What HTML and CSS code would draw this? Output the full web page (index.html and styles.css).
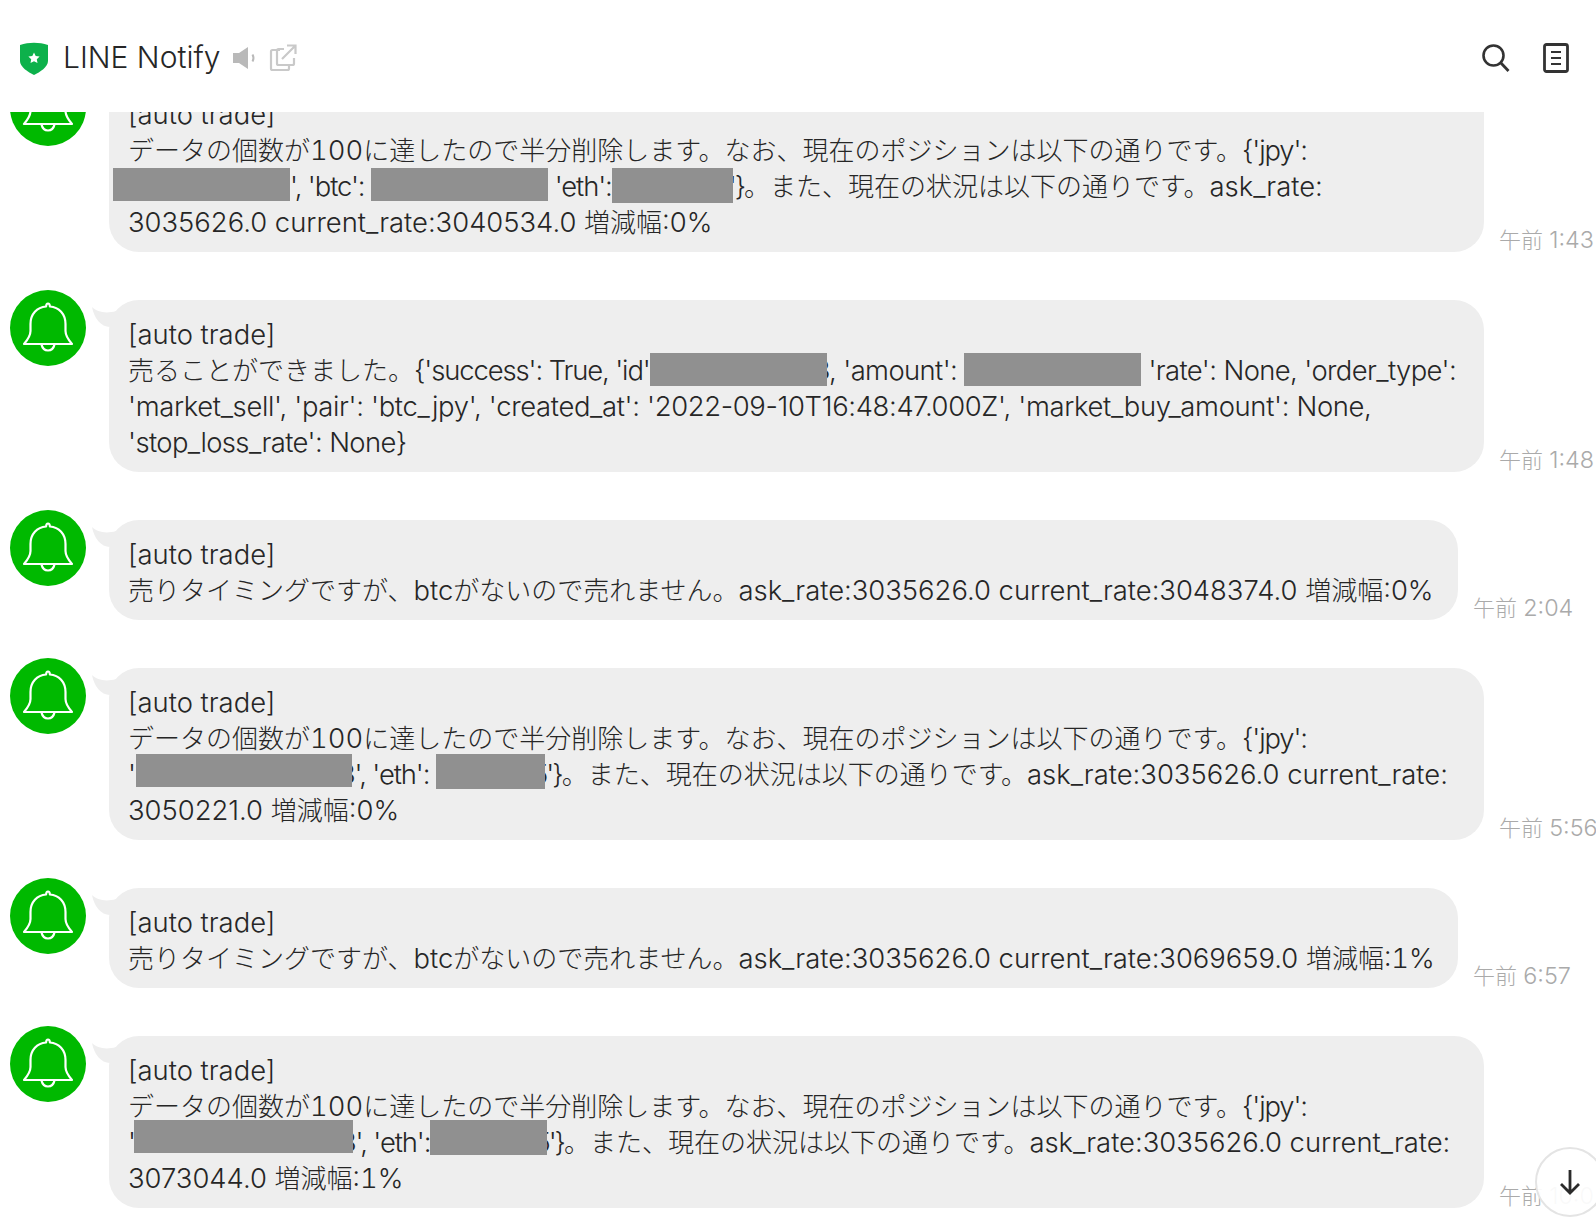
FILE: index.html
```html
<!DOCTYPE html>
<html lang="ja">
<head>
    <meta charset="utf-8">
    <title>LINE Notify</title>
    <link rel="stylesheet" href="styles.css">
</head>
<body>
    <svg class="sprite" width="0" height="0">
        <symbol id="bell" viewBox="0 0 76 76">
            <path d="M38 13.500c-1.100 0-1.800.7-1.900 3C27 17.200 20.500 24 20.500 34v7c0 5-3.500 9.500-6.500 13h48c-3-3.500-6.500-8-6.500-13v-7c0-10-6.500-16.800-15.600-17.500-.1-2.300-.8-3-1.900-3z" fill="none" stroke="#fff" stroke-width="2.200" stroke-linejoin="round"/>
            <path d="M31.500 54.500c.8 3.600 3.500 6 6.500 6s5.700-2.400 6.500-6" fill="none" stroke="#fff" stroke-width="2.200"/>
        </symbol>
    </svg>

    <header class="topbar">
        <svg class="shield" width="30" height="33" viewBox="0 0 30 33">
            <path d="M1 3c9-3 19-3 28 0v16c0 6-8 11-14 14C9 30 1 25 1 19z" fill="#0db14b"/>
            <path d="M15 10.500l1.700 3.500 3.900.5-2.800 2.700.7 3.800-3.500-1.800-3.500 1.800.7-3.800-2.800-2.700 3.900-.5z" fill="#fff"/>
        </svg>
        <h1 class="room-name">LINE Notify</h1>
        <svg class="mute-icon" width="24" height="24" viewBox="0 0 24 24">
            <path d="M1 7h6l9-6v22l-9-6H1z" fill="#b9b9b9"/>
            <path d="M20.500 8.500c1.300 2.300 1.300 4.700 0 7" fill="none" stroke="#b9b9b9" stroke-width="2"/>
        </svg>
        <svg class="share-icon" width="28" height="28" viewBox="0 0 28 28">
            <path d="M11 6H3.500C2.500 6 2 6.500 2 7.500v17c0 1 .5 1.500 1.500 1.500h15c1 0 1.500-.5 1.500-1.500V22" fill="none" stroke="#c9c9c9" stroke-width="2.200"/>
            <path d="M25 14v5.500c0 1-.5 1.500-1.500 1.500h-14C8.500 21 8 20.500 8 19.500v-13C8 5.500 8.500 5 9.500 5H15" fill="none" stroke="#c9c9c9" stroke-width="2.200"/>
            <path d="M13 15L26 2M18 1.500h8.500V10" fill="none" stroke="#c9c9c9" stroke-width="2.200"/>
        </svg>
        <div class="topbar-actions">
            <svg width="28" height="28" viewBox="0 0 28 28">
                <circle cx="11.500" cy="11.500" r="10" fill="none" stroke="#333" stroke-width="2.600"/>
                <path d="M18.500 18.500l8 8.500" stroke="#333" stroke-width="2.800"/>
            </svg>
            <svg width="26" height="30" viewBox="0 0 26 30">
                <rect x="1.500" y="1.500" width="23" height="27" rx="2" fill="none" stroke="#333" stroke-width="2.800"/>
                <path d="M8 9h10M8 15h10M8 21h10" stroke="#333" stroke-width="2.200"/>
            </svg>
        </div>
    </header>

    <main class="messages">
        <div class="row">
            <div class="avatar"><svg width="76" height="76"><use href="#bell"/></svg></div>
            <div class="bubble bubble-wide"><span class="en">[auto trade]</span><br>データの個数が<span class="en num">100</span>に達したので半分削除します。なお、現在のポジションは以下の通りです。<span class="en tight-3">{'jpy':</span><br><span class="mask mask-flush lift-1" style="width:177px"></span><span class="en tight-3">', 'btc': </span><span class="mask lift-1" style="width:177px"></span><span class="en tight-3"> 'eth':</span><span class="mask mask-tall mask-over-small lift-1" style="width:121px"></span><span class="en tight-4">'}</span>。また、現在の状況は以下の通りです。<span class="en">ask_rate:</span><br><span class="en">3035626.0 current_rate:3040534.0 </span>増減幅<span class="en">:0%</span></div>
            <time class="stamp">午前 <span class="en">1:43</span></time>
        </div>
        <div class="row">
            <div class="avatar"><svg width="76" height="76"><use href="#bell"/></svg></div>
            <div class="bubble bubble-wide"><span class="en">[auto trade]</span><br>売ることができました。<span class="en tight-3">{'success': True, 'id'</span><span class="mask mask-over" style="width:177px"></span><span class="en tight-2">3, 'amount': </span><span class="mask" style="width:177px"></span><span class="en tight-2"> 'rate': None, 'order_type':</span><br><span class="en tight-1">'market_sell', 'pair': 'btc_jpy', 'created_at': '2022-09-10T16:48:47.000Z', 'market_buy_amount': None,</span><br><span class="en tight-2">'stop_loss_rate': None}</span></div>
            <time class="stamp">午前 <span class="en">1:48</span></time>
        </div>
        <div class="row">
            <div class="avatar"><svg width="76" height="76"><use href="#bell"/></svg></div>
            <div class="bubble bubble-fit"><span class="en">[auto trade]</span><br>売りタイミングですが、<span class="en">btc</span>がないので売れません。<span class="en">ask_rate:3035626.0 current_rate:3048374.0 </span>増減幅<span class="en">:0%</span></div>
            <time class="stamp">午前 <span class="en">2:04</span></time>
        </div>
        <div class="row">
            <div class="avatar"><svg width="76" height="76"><use href="#bell"/></svg></div>
            <div class="bubble bubble-wide"><span class="en">[auto trade]</span><br>データの個数が<span class="en num">100</span>に達したので半分削除します。なお、現在のポジションは以下の通りです。<span class="en tight-3">{'jpy':</span><br><span class="en">'</span><span class="mask mask-over lift-3" style="width:216px"></span><span class="en tight-3">3', 'eth': </span><span class="mask mask-tall mask-over lift-3" style="width:109px"></span><span class="en tight-4">5'}</span>。また、現在の状況は以下の通りです。<span class="en">ask_rate:3035626.0 current_rate:</span><br><span class="en">3050221.0 </span>増減幅<span class="en">:0%</span></div>
            <time class="stamp">午前 <span class="en">5:56</span></time>
        </div>
        <div class="row">
            <div class="avatar"><svg width="76" height="76"><use href="#bell"/></svg></div>
            <div class="bubble bubble-fit"><span class="en">[auto trade]</span><br>売りタイミングですが、<span class="en">btc</span>がないので売れません。<span class="en">ask_rate:3035626.0 current_rate:3069659.0 </span>増減幅<span class="en num">:1%</span></div>
            <time class="stamp">午前 <span class="en">6:57</span></time>
        </div>
        <div class="row">
            <div class="avatar"><svg width="76" height="76"><use href="#bell"/></svg></div>
            <div class="bubble bubble-wide"><span class="en">[auto trade]</span><br>データの個数が<span class="en num">100</span>に達したので半分削除します。なお、現在のポジションは以下の通りです。<span class="en tight-3">{'jpy':</span><br><span class="en">'</span><span class="mask mask-near mask-over lift-5" style="width:219px"></span><span class="en tight-3">3', 'eth':</span><span class="mask mask-tall mask-over lift-5" style="width:117px"></span><span class="en tight-4">5'}</span>。また、現在の状況は以下の通りです。<span class="en">ask_rate:3035626.0 current_rate:</span><br><span class="en">3073044.0 </span>増減幅<span class="en num">:1%</span></div>
            <time class="stamp">午前 <span class="en">10:0</span></time>
        </div>
    </main>

    <button class="scroll-down">
        <svg width="24" height="28" viewBox="0 0 24 28">
            <path d="M12 2v23M3 16l9 9 9-9" fill="none" stroke="#2b2b2b" stroke-width="2.800"/>
        </svg>
    </button>
</body>
</html>
```

FILE: styles.css
```css
html, body {
    height: 100%;
}
body {
    margin: 0;
    background-color: #fff;
    color: #262626;
    font-family: Inter, "Noto Sans CJK JP", sans-serif;
    font-weight: 300;
    overflow: hidden;
    display: flex;
    flex-direction: column;
    position: relative;
}
.sprite {
    position: absolute;
}
.topbar {
    flex: none;
    height: 112px;
    display: flex;
    align-items: center;
    padding: 4px 27px 0 19px;
    box-sizing: border-box;
}
.shield {
    margin-right: 14px;
}
.room-name {
    margin: 0 0 2px;
    font-size: 30px;
    font-weight: 300;
    line-height: 40px;
}
.mute-icon {
    margin-left: 12px;
}
.share-icon {
    margin-left: 13px;
}
.topbar-actions {
    margin-left: auto;
    display: flex;
    align-items: center;
    gap: 33px;
}
.messages {
    flex: 1;
    min-height: 0;
    overflow: hidden;
    display: flex;
    flex-direction: column;
    justify-content: flex-end;
    gap: 48px;
    padding-bottom: 10px;
}
.row {
    flex: none;
    display: flex;
    align-items: flex-end;
    position: relative;
    padding-left: 109px;
}
.avatar {
    position: absolute;
    left: 10px;
    top: -10px;
    width: 76px;
    height: 76px;
    border-radius: 50%;
    background-color: #00b900;
}
.avatar svg {
    display: block;
}
.bubble {
    flex: none;
    position: relative;
    padding: 17px 19px 11px;
    background-color: #eee;
    border-radius: 30px;
    font-size: 26px;
    line-height: 36px;
    white-space: nowrap;
}
.bubble::before {
    content: "";
    position: absolute;
    left: -17px;
    top: 7px;
    width: 24px;
    height: 20px;
    background-color: #eee;
    clip-path: path("M0 0C5 5 14 7 24 4V20H18C9 20 2 11 0 0Z");
}
.bubble-wide {
    width: 1375px;
    box-sizing: border-box;
}
.bubble-fit {
    width: 1349px;
    box-sizing: border-box;
}
.en {
    font-size: 27.4px;
    line-height: 0;
}
.num {
    font-variant-numeric: tabular-nums;
}
.tight-1 {
    letter-spacing: -0.33px;
}
.tight-2 {
    letter-spacing: -0.6px;
}
.tight-3 {
    letter-spacing: -1.1px;
}
.tight-4 {
    letter-spacing: -2px;
}
.mask {
    display: inline-block;
    position: relative;
    height: 33px;
    margin: -6px 0;
    vertical-align: 0;
    background-color: #909090;
}
.mask-tall {
    height: 35px;
    vertical-align: -2px;
}
.mask-flush {
    margin-left: -15px;
}
.mask-near {
    margin-left: -2px;
}
.mask-over {
    margin-right: -13px;
}
.mask-over-small {
    margin-right: -4px;
}
.lift-1 {
    top: -1px;
}
.lift-3 {
    top: -3px;
}
.lift-5 {
    top: -5px;
}
.stamp {
    flex: none;
    margin: 0 0 0 15px;
    font-size: 22px;
    line-height: 24px;
    color: #aaa;
    white-space: nowrap;
}
.stamp .en {
    font-size: 23.4px;
}
.scroll-down {
    position: absolute;
    left: 1535px;
    top: 1147px;
    width: 70px;
    height: 70px;
    padding: 0;
    border: 2px solid #e4e4e4;
    border-radius: 50%;
    background-color: rgba(255, 255, 255, 0.93);
    display: flex;
    align-items: center;
    justify-content: center;
}
```
